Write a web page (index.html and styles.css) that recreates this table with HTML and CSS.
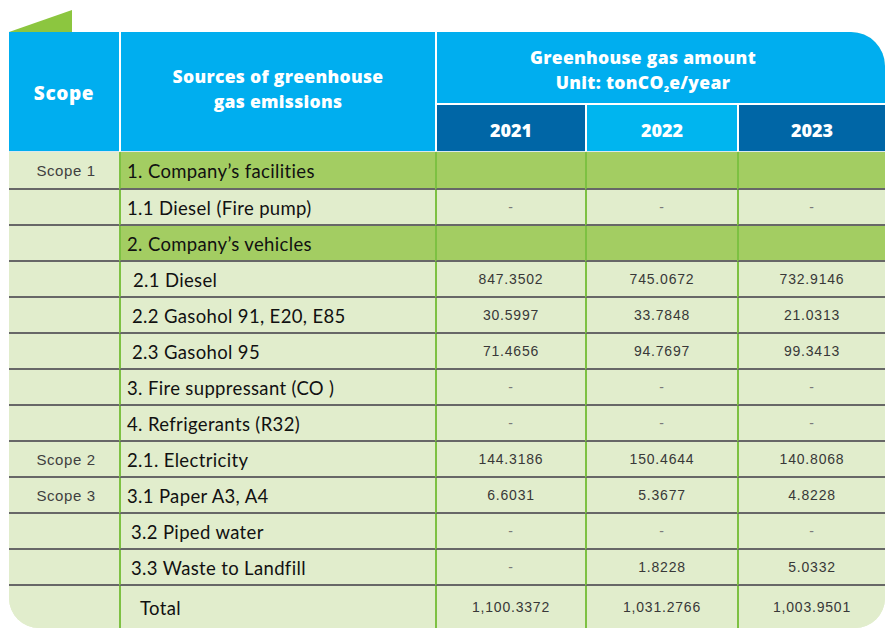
FILE: index.html
```html
<!DOCTYPE html>
<html>
<head>
<meta charset="utf-8">
<link rel="stylesheet" href="styles.css">
</head>
<body>
<div class="page">
  <div class="tab"></div>
  <div class="ghg">
    <div class="h h-scope"><div>Scope</div></div>
    <div class="h h-src"><div>Sources of greenhouse<br>gas emissions</div></div>
    <div class="h h-amt"><div>Greenhouse gas amount<br>Unit: tonCO<span class="sub">2</span>e/year</div></div>
    <div class="h yr yr-dark"><div>2021</div></div>
    <div class="h yr yr-light"><div>2022</div></div>
    <div class="h yr yr-dark"><div>2023</div></div>

    <div class="c scope">Scope 1</div>
    <div class="c lbl sec">1. Company’s facilities</div>
    <div class="c num sec"></div><div class="c num sec"></div><div class="c num sec"></div>

    <div class="c scope"></div>
    <div class="c lbl">1.1 Diesel (Fire pump)</div>
    <div class="c num dash">-</div><div class="c num dash">-</div><div class="c num dash">-</div>

    <div class="c scope"></div>
    <div class="c lbl sec">2. Company’s vehicles</div>
    <div class="c num sec"></div><div class="c num sec"></div><div class="c num sec"></div>

    <div class="c scope"></div>
    <div class="c lbl ind">2.1 Diesel</div>
    <div class="c num">847.3502</div><div class="c num">745.0672</div><div class="c num">732.9146</div>

    <div class="c scope"></div>
    <div class="c lbl ind2">2.2 Gasohol 91, E20, E85</div>
    <div class="c num">30.5997</div><div class="c num">33.7848</div><div class="c num">21.0313</div>

    <div class="c scope"></div>
    <div class="c lbl ind2">2.3 Gasohol 95</div>
    <div class="c num">71.4656</div><div class="c num">94.7697</div><div class="c num">99.3413</div>

    <div class="c scope"></div>
    <div class="c lbl">3. Fire suppressant (CO )</div>
    <div class="c num dash">-</div><div class="c num dash">-</div><div class="c num dash">-</div>

    <div class="c scope"></div>
    <div class="c lbl">4. Refrigerants (R32)</div>
    <div class="c num dash">-</div><div class="c num dash">-</div><div class="c num dash">-</div>

    <div class="c scope">Scope 2</div>
    <div class="c lbl">2.1. Electricity</div>
    <div class="c num">144.3186</div><div class="c num">150.4644</div><div class="c num">140.8068</div>

    <div class="c scope">Scope 3</div>
    <div class="c lbl">3.1 Paper A3, A4</div>
    <div class="c num">6.6031</div><div class="c num">5.3677</div><div class="c num">4.8228</div>

    <div class="c scope"></div>
    <div class="c lbl ind3">3.2 Piped water</div>
    <div class="c num dash">-</div><div class="c num dash">-</div><div class="c num dash">-</div>

    <div class="c scope"></div>
    <div class="c lbl ind3">3.3 Waste to Landfill</div>
    <div class="c num dash">-</div><div class="c num">1.8228</div><div class="c num">5.0332</div>

    <div class="c scope last"></div>
    <div class="c lbl total last">Total</div>
    <div class="c num last">1,100.3372</div><div class="c num last">1,031.2766</div><div class="c num last">1,003.9501</div>
  </div>
</div>
</body>
</html>
```
FILE: styles.css
```css
* { box-sizing: border-box; }
html, body { margin: 0; padding: 0; background: #ffffff; }
.page {
  padding: 10px 0 0 9px;
  width: 895px;
  height: 638px;
}
.tab {
  width: 63px;
  height: 22px;
  background: #8cc63f;
  clip-path: polygon(0 100%, 100% 0, 100% 100%);
}
.ghg {
  width: 876px;
  display: grid;
  grid-template-columns: 110px 316px 150px 152px 148px;
  grid-template-rows: 73px 47px 38px repeat(11, 36px) 42px;
  border-radius: 0 34px 30px 30px;
  overflow: hidden;
  background: #e1edcc;
}
.h {
  color: #ffffff;
  font-family: "Open Sans", Lato, sans-serif;
  font-weight: 800;
  display: flex;
  align-items: center;
  justify-content: center;
  text-align: center;
  background: #00aeef;
}
.h-scope {
  grid-row: 1 / 3;
  font-size: 19px;
  letter-spacing: 0.6px;
  padding-top: 2px;
  border-bottom: 1px solid #d9e8ef;
}
.h-src {
  grid-row: 1 / 3;
  border-left: 2px solid #ffffff;
  font-size: 17.5px;
  line-height: 25px;
  padding: 0 0 6px 0;
  border-bottom: 1px solid #d9e8ef;
  letter-spacing: 0.3px;
}
.h-amt {
  grid-column: 3 / 6;
  border-left: 2px solid #ffffff;
  border-bottom: 2px solid #ffffff;
  font-size: 17.5px;
  line-height: 25px;
  padding: 4px 36px 0 0;
  letter-spacing: 0.3px;
}
.sub { font-size: 9px; vertical-align: -3px; line-height: 0; }
.yr {
  border-left: 2px solid #ffffff;
  font-size: 18px;
  padding-top: 3px;
  border-bottom: 1px solid #d9e8ef;
}
.yr-dark { background: #0066a6; }
.yr-light { background: #00b5ef; }

.c {
  display: flex;
  align-items: center;
  border-bottom: 2px solid #676767;
  background: #e1edcc;
}
.c.last { border-bottom: none; }
.scope {
  justify-content: center;
  font-family: "Liberation Sans", Arial, sans-serif;
  font-size: 15px;
  letter-spacing: 0.6px;
  color: #3f3f3f;
  padding-left: 4px;
}
.lbl {
  border-left: 2px solid #7dc142;
  font-family: Lato, "Noto Sans", sans-serif;
  font-size: 18.5px;
  color: #111111;
  padding-left: 6px;
  letter-spacing: 0.35px;
  padding-top: 1px;
}
.lbl.ind { padding-left: 12px; }
.lbl.ind2 { padding-left: 11px; }
.lbl.ind3 { padding-left: 10px; }
.lbl.total { padding-left: 19px; }
.num {
  border-left: 2px solid #7dc142;
  justify-content: center;
  font-family: "Liberation Sans", Arial, sans-serif;
  font-size: 14px;
  letter-spacing: 0.8px;
  color: #383838;
}
.dash { color: #7a7a7a; }
.sec { background: #a3cd62; }
```
